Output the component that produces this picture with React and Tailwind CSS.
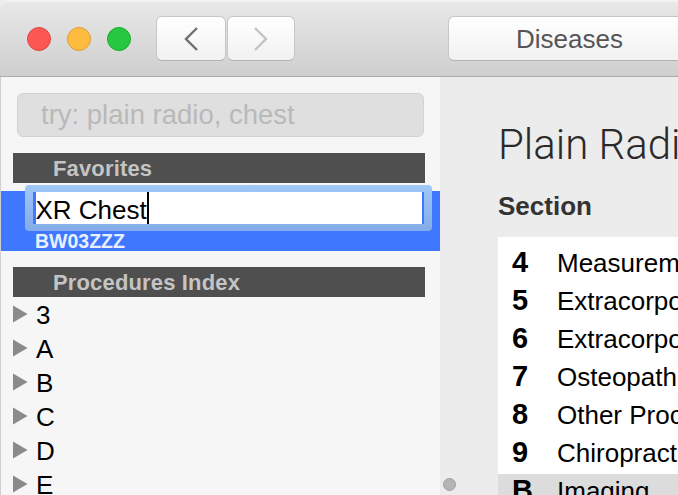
const LETTERS = ["3", "A", "B", "C", "D", "E"];
const SECTIONS = [
  ["4", "Measurement and Monitoring"],
  ["5", "Extracorporeal Assistance"],
  ["6", "Extracorporeal Therapies"],
  ["7", "Osteopathic"],
  ["8", "Other Procedures"],
  ["9", "Chiropractic"],
  ["B", "Imaging"],
];

function Traffic({ cls }) {
  return <div className={`w-6 h-6 rounded-full border ${cls}`} />;
}

function SectionBar({ children }) {
  return (
    <div className="h-[30px] bg-[#4f4f4f] ml-[12px] mr-[15px] pl-[40px] pt-[1px] flex items-center text-[22px] tracking-[0.15px] font-bold text-[#c4c4c4]">
      {children}
    </div>
  );
}

export default function App() {
  return (
    <div className="w-[678px] h-[495px] overflow-hidden flex flex-col bg-[#ececec] font-['Liberation_Sans',Arial,sans-serif]">
      <header className="h-[77px] shrink-0 flex items-center pl-[27px] pb-[1px] border-t-2 border-t-[#f2f2f2] border-b border-b-[#ababab] bg-gradient-to-b from-[#e8e8e8] to-[#cfcfcf] rounded-tl-lg">
        <div className="flex gap-4 mt-[1px]">
          <Traffic cls="bg-[#fc5753] border-[#df4744]" />
          <Traffic cls="bg-[#fdbc40] border-[#de9f34]" />
          <Traffic cls="bg-[#27c840] border-[#1aab29]" />
        </div>
        <div className="flex gap-[1px] ml-[25px]">
          <button className="w-[70px] h-[45px] rounded-md bg-gradient-to-b from-white to-[#f1f1f1] border border-[#c6c6c6] border-b-[#b4b4b4] flex items-center justify-center">
            <svg width="16" height="26" viewBox="0 0 16 26" fill="none" stroke="#707070" strokeWidth="2.4"><path d="M14 2 L3 13 L14 24" /></svg>
          </button>
          <button className="w-[68px] h-[45px] rounded-md bg-gradient-to-b from-white to-[#f1f1f1] border border-[#c6c6c6] border-b-[#b4b4b4] flex items-center justify-center">
            <svg width="16" height="26" viewBox="0 0 16 26" fill="none" stroke="#c4c4c4" strokeWidth="2.4"><path d="M2 2 L13 13 L2 24" /></svg>
          </button>
        </div>
        <button className="ml-[153px] w-[241px] h-[45px] shrink-0 rounded-l-md bg-gradient-to-b from-white to-[#f1f1f1] border border-r-0 border-[#c6c6c6] border-b-[#b4b4b4] text-[26px] text-[#555555] pl-[1px] pt-[2px]">
          Diseases
        </button>
      </header>

      <div className="flex flex-1 min-h-0">
        <aside className="w-[440px] shrink-0 bg-[#f6f6f6] border-l border-l-[#cfcfcf] overflow-hidden">
          <div className="h-[44px] mt-[16px] ml-[16px] mr-[16px] rounded-md bg-[#dfdfdf] border border-[#d2d2d2] flex items-center pl-[23px] text-[27.5px] text-[#b9b9b9]">
            try: plain radio, chest
          </div>
          <div className="mt-[16px]"><SectionBar>Favorites</SectionBar></div>
          <div className="mt-[8px] h-[60px] bg-[#3f78ff] -ml-px">
            <div className="relative -top-[6px] ml-[25px] mr-[8px] h-[46px] rounded bg-gradient-to-b from-[#9fc8f9] to-[#83abe7] px-[8px] py-[7px]">
              <div className="h-full bg-[#3f78ff] px-[2.5px]">
                <div className="h-full bg-white flex items-center text-[26px] text-black">
                  <span className="mt-[4px]">XR Chest</span>
                  <span className="w-[2px] h-full bg-black" />
                </div>
              </div>
            </div>
            <div className="-mt-[6px] pl-[35px] text-[19.5px] leading-[20px] font-bold text-[#e8f0ff]">BW03ZZZ</div>
          </div>
          <div className="mt-[16px]"><SectionBar>Procedures Index</SectionBar></div>
          <ul className="mt-[2px]">
            {LETTERS.map((l) => (
              <li key={l} className="h-[34px] flex items-center text-[26px] text-black">
                <svg className="ml-[11px] -mt-[4px]" width="16" height="18" viewBox="0 0 16 18"><path d="M1 0.5 L15.5 9 L1 17.5 Z" fill="#8a8a8a" /></svg>
                <span className="ml-[8px] -mt-[1px]">{l}</span>
              </li>
            ))}
          </ul>
        </aside>

        <main className="relative flex-1 min-w-0 pl-[58px] overflow-hidden bg-[#ececec]">
          <div className="absolute left-[3px] bottom-[4px] w-[13px] h-[13px] rounded-full bg-[#b4b4b4] border border-[#a0a0a0]" />
          <h1 className="mt-[43px] h-[50px] leading-[50px] text-[42px] font-light text-[#2a2a2a] whitespace-nowrap font-['Roboto',sans-serif]">Plain Radiography</h1>
          <h2 className="mt-[21px] h-[30px] leading-[30px] text-[26px] font-bold text-[#333333]">Section</h2>
          <ul className="mt-[16px] pt-[9px] bg-white">
            {SECTIONS.map(([k, v]) => (
              <li key={k} className={`h-[38px] flex items-center text-[26px] text-black whitespace-nowrap ${k === "B" ? "bg-[#dcdcdc]" : ""}`}>
                <b className="w-[59px] pl-[14px] shrink-0 -mt-1 text-[29px]">{k}</b>
                <span className="-mt-1">{v}</span>
              </li>
            ))}
          </ul>
        </main>
      </div>
    </div>
  );
}
